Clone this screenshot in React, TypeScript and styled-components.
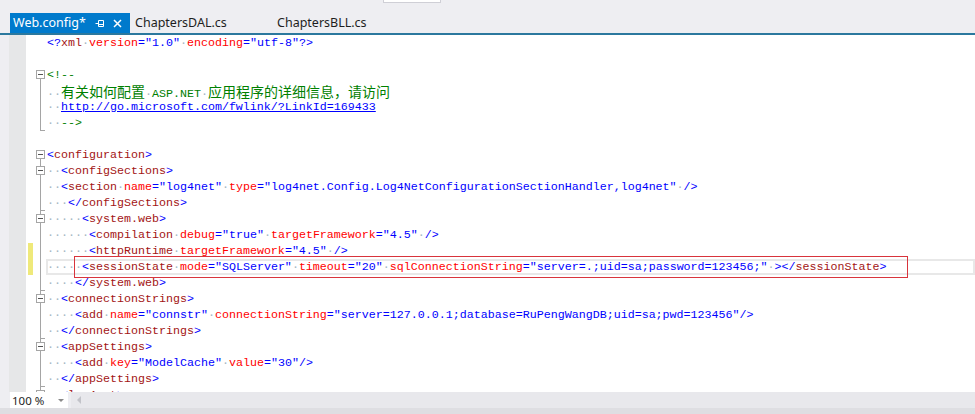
import styled, { createGlobalStyle, css } from 'styled-components';

type Fold = 'none' | 'open' | 'openNested' | 'line' | 'end';

interface LineData {
	text: string;
	fold: Fold;
	comment?: boolean;
	link?: boolean;
	changed?: boolean;
	current?: boolean;
	marked?: number;
}

const lines: LineData[] = [
	{ text: '<?xml version="1.0" encoding="utf-8"?>', fold: 'none' },
	{ text: '', fold: 'none' },
	{ text: '<!--', fold: 'open', comment: true },
	{ text: '  有关如何配置 ASP.NET 应用程序的详细信息，请访问', fold: 'line', comment: true },
	{ text: '  http://go.microsoft.com/fwlink/?LinkId=169433', fold: 'line', comment: true, link: true },
	{ text: '  -->', fold: 'end', comment: true },
	{ text: '', fold: 'none' },
	{ text: '<configuration>', fold: 'open' },
	{ text: '  <configSections>', fold: 'openNested' },
	{ text: '  <section name="log4net" type="log4net.Config.Log4NetConfigurationSectionHandler,log4net" />', fold: 'line' },
	{ text: '   </configSections>', fold: 'end' },
	{ text: '     <system.web>', fold: 'openNested' },
	{ text: '      <compilation debug="true" targetFramework="4.5" />', fold: 'line' },
	{ text: '      <httpRuntime targetFramework="4.5" />', fold: 'line', changed: true },
	{
		text: '     <sessionState mode="SQLServer" timeout="20" sqlConnectionString="server=.;uid=sa;password=123456;" ></sessionState>',
		fold: 'line',
		changed: true,
		current: true,
		marked: 4,
	},
	{ text: '    </system.web>', fold: 'end' },
	{ text: '  <connectionStrings>', fold: 'openNested' },
	{ text: '    <add name="connstr" connectionString="server=127.0.0.1;database=RuPengWangDB;uid=sa;pwd=123456"/>', fold: 'line' },
	{ text: '  </connectionStrings>', fold: 'end' },
	{ text: '  <appSettings>', fold: 'openNested' },
	{ text: '    <add key="ModelCache" value="30"/>', fold: 'line' },
	{ text: '  </appSettings>', fold: 'end' },
	{ text: '  <log4net>', fold: 'openNested' },
];

const tabs = [
	{ title: 'Web.config*', active: true },
	{ title: 'ChaptersDAL.cs', active: false },
	{ title: 'ChaptersBLL.cs', active: false },
];

const dots = (s: string) => '·'.repeat(s.length);

// splits one line of xml into coloured pieces, the way the VS editor paints it
function xmlTokens(text: string, keyBase: string): JSX.Element[] {
	const re = /( +)|(<\?|<\/|<|\?>|\/>|>|=)|("[^"]*")|([^ <>="?/]+)/g;
	const out: JSX.Element[] = [];
	let inTag = false;
	let expectName = false;
	let m: RegExpExecArray | null;
	let i = 0;
	while ((m = re.exec(text))) {
		const key = `${keyBase}-${i++}`;
		if (m[1]) {
			out.push(<Ws key={key}>{dots(m[1])}</Ws>);
		} else if (m[2]) {
			const d = m[2];
			if (d === '<' || d === '</' || d === '<?') {
				inTag = true;
				expectName = true;
			} else if (d !== '=') {
				inTag = false;
			}
			out.push(<Delim key={key}>{d}</Delim>);
		} else if (m[3]) {
			out.push(<Value key={key}>{m[3]}</Value>);
		} else if (m[4]) {
			if (expectName) {
				out.push(<Elem key={key}>{m[4]}</Elem>);
				expectName = false;
			} else if (inTag) {
				out.push(<Attr key={key}>{m[4]}</Attr>);
			} else {
				out.push(<span key={key}>{m[4]}</span>);
			}
		}
	}
	return out;
}

function commentTokens(line: LineData, keyBase: string): JSX.Element[] {
	const parts = line.text.match(/( +)|([\u3000-\u9fff\uff00-\uffef]+)|([^ \u3000-\u9fff\uff00-\uffef]+)/g) || [];
	return parts.map((p, i) => {
		const key = `${keyBase}-${i}`;
		if (p.startsWith(' ')) return <Ws key={key}>{dots(p)}</Ws>;
		if (/[\u3000-\u9fff\uff00-\uffef]/.test(p)) return <Cjk key={key}>{p}</Cjk>;
		if (line.link) return <Link key={key}>{p}</Link>;
		return <Comment key={key}>{p}</Comment>;
	});
}

function renderCode(line: LineData, idx: number) {
	const key = `l${idx}`;
	if (line.comment) return commentTokens(line, key);
	if (line.marked !== undefined) {
		const lead = line.text.slice(0, line.marked);
		const rest = line.text.slice(line.marked);
		return [
			<Ws key={`${key}-lead`}>{dots(lead)}</Ws>,
			<Mark key={`${key}-mark`}>{xmlTokens(rest, key)}</Mark>,
		];
	}
	return xmlTokens(line.text, key);
}

function PinIcon() {
	return (
		<svg width='10' height='9' viewBox='0 0 10 9'>
			<path d='M0.5 4.5h3M3.5 1.5v6M3.5 1.5h5v6h-5M3.5 5.5h5' stroke='#fff' strokeWidth='1' fill='none' />
		</svg>
	);
}

function CloseIcon() {
	return (
		<svg width='9' height='9' viewBox='0 0 9 9'>
			<path d='M1 1l7 7M8 1l-7 7' stroke='#fff' strokeWidth='1.5' />
		</svg>
	);
}

export default function App() {
	return (
		<>
			<GlobalStyle />
			<Window>
				<TopStrip>
					<SearchStub />
				</TopStrip>
				<TabWell>
					{tabs.map((t) => (
						<Tab key={t.title} $active={t.active}>
							<TabTitle>{t.title}</TabTitle>
							{t.active && (
								<TabIcons>
									<PinIcon />
									<CloseIcon />
								</TabIcons>
							)}
						</Tab>
					))}
				</TabWell>
				<TabRule />
				<Editor>
					{lines.map((line, idx) => (
						<Line key={idx}>
							<IndicatorMargin />
							<ChangeMargin>{line.changed && <ChangeMark />}</ChangeMargin>
							<OutlineCell $fold={line.fold}>
								{(line.fold === 'open' || line.fold === 'openNested') && <FoldBox />}
							</OutlineCell>
							<Code $current={!!line.current}>{renderCode(line, idx)}</Code>
						</Line>
					))}
				</Editor>
				<BottomBar>
					<ZoomBox>
						<span>100 %</span>
						<ZoomArrow />
					</ZoomBox>
					<ScrollTrack>
						<ScrollArrow />
					</ScrollTrack>
				</BottomBar>
				<BottomPad />
			</Window>
		</>
	);
}

const GlobalStyle = createGlobalStyle`
	html, body {
		margin: 0;
		padding: 0;
		background: #eeeef2;
	}
	body {
		width: 975px;
		height: 414px;
		overflow: hidden;
	}
`;

const Window = styled.div`
	display: flex;
	flex-direction: column;
	width: 975px;
	height: 414px;
	background: #eeeef2;
	font-family: 'Noto Sans', 'Liberation Sans', sans-serif;
`;

const TopStrip = styled.div`
	height: 13px;
	display: flex;
	align-items: flex-start;
	padding-left: 383px;
`;

const SearchStub = styled.div`
	width: 56px;
	height: 2px;
	background: #fff;
	border: 1px solid #cfcfd6;
	border-top: none;
`;

const TabWell = styled.div`
	height: 20px;
	display: flex;
	padding-left: 10px;
`;

const Tab = styled.div<{ $active: boolean }>`
	display: flex;
	align-items: center;
	box-sizing: border-box;
	padding-left: ${(p) => (p.$active ? '3px' : '5px')};
	width: ${(p) => (p.$active ? '120px' : '142px')};
	font-size: 12.5px;
	color: #1e1e1e;

	${(p) =>
		p.$active &&
		css`
			background: #007acc;
			color: #fff;
		`}
`;

const TabTitle = styled.span`
	white-space: nowrap;
	line-height: 20px;
`;

const TabIcons = styled.span`
	display: flex;
	align-items: center;
	gap: 8px;
	margin-left: 9px;

	svg {
		display: block;
	}
`;

const TabRule = styled.div`
	height: 2px;
	background: #2b789e;
`;

const Editor = styled.div`
	flex: 1;
	min-height: 0;
	overflow: hidden;
	margin-left: 9px;
	background: #fff;
	display: flex;
	flex-direction: column;
`;

const Line = styled.div`
	display: flex;
	flex: 0 0 16px;
	height: 16px;
`;

const IndicatorMargin = styled.div`
	width: 17px;
	background: #e6e7e8;
`;

const ChangeMargin = styled.div`
	width: 9px;
	padding-left: 2px;
	box-sizing: border-box;
`;

const ChangeMark = styled.div`
	width: 5px;
	height: 16px;
	background: #efe97a;
`;

const lineColor = '#a5a5a5';

const OutlineCell = styled.div<{ $fold: Fold }>`
	position: relative;
	width: 11px;

	&::before {
		content: '';
		position: absolute;
		left: 5px;
		width: 1px;
		background: ${lineColor};
		display: ${(p) => (p.$fold === 'none' ? 'none' : 'block')};
		top: ${(p) => (p.$fold === 'open' ? '12px' : '0')};
		bottom: 0;
	}

	&::after {
		content: '';
		position: absolute;
		left: 5px;
		bottom: 0;
		width: 5px;
		height: 1px;
		background: ${lineColor};
		display: ${(p) => (p.$fold === 'end' ? 'block' : 'none')};
	}
`;

const FoldBox = styled.div`
	position: absolute;
	left: 1px;
	top: 3px;
	width: 7px;
	height: 7px;
	border: 1px solid ${lineColor};
	background: #fff;
	z-index: 1;

	&::after {
		content: '';
		position: absolute;
		left: 1px;
		top: 3px;
		width: 5px;
		height: 1px;
		background: #555;
	}
`;

const Code = styled.div<{ $current: boolean }>`
	flex: 1;
	padding-left: 1px;
	white-space: pre;
	font-family: 'Liberation Mono', 'DejaVu Sans Mono', monospace;
	font-size: 11.67px;
	line-height: 16px;
	color: #000;
	${(p) =>
		p.$current &&
		css`
			box-shadow: inset 0 0 0 2px #e8e8e8;
		`}
`;

const Ws = styled.span`
	color: #a3b6c2;
`;

const Delim = styled.span`
	color: #0000ff;
`;

const Elem = styled.span`
	color: #a31515;
`;

const Attr = styled.span`
	color: #ff0000;
`;

const Value = styled.span`
	color: #0000ff;
`;

const Comment = styled.span`
	color: #008000;
`;

const Cjk = styled.span`
	color: #008000;
	font-family: 'Noto Sans CJK SC', sans-serif;
	font-size: 14px;
`;

const Link = styled.span`
	color: #0000ff;
	text-decoration: underline;
`;

const Mark = styled.span`
	border: 1px solid #d8343c;
	margin-left: -1px;
	padding: 3px 20px 3px 0;
`;

const BottomBar = styled.div`
	height: 16px;
	display: flex;
	padding-left: 10px;
	background: #eeeef2;
`;

const ZoomBox = styled.div`
	width: 58px;
	display: flex;
	align-items: center;
	justify-content: space-between;
	box-sizing: border-box;
	padding: 0 4px 0 2px;
	background: #fff;
	font-size: 11.5px;
	color: #1e1e1e;
`;

const ZoomArrow = styled.span`
	width: 0;
	height: 0;
	border-left: 3px solid transparent;
	border-right: 3px solid transparent;
	border-top: 3px solid #8a8a8a;
`;

const ScrollTrack = styled.div`
	flex: 1;
	margin-left: 3px;
	display: flex;
	align-items: center;
	padding-left: 6px;
	background: #e8e8ec;
`;

const ScrollArrow = styled.span`
	width: 0;
	height: 0;
	border-top: 4px solid transparent;
	border-bottom: 4px solid transparent;
	border-right: 4px solid #c2c3c9;
`;

const BottomPad = styled.div`
	height: 6px;
	background: #dedee2;
`;
